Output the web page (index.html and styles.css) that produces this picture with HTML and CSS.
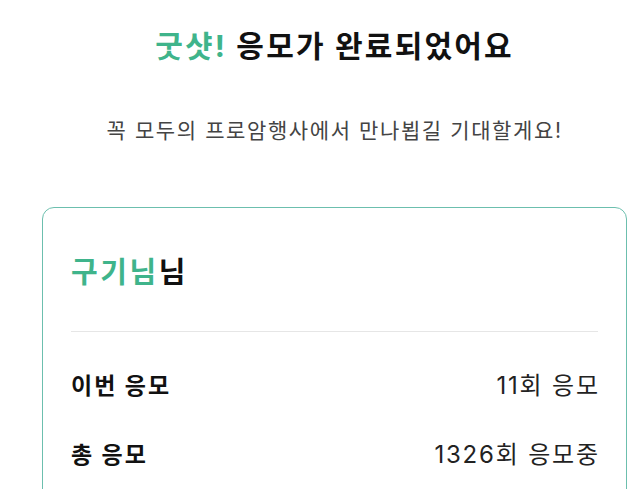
FILE: index.html
```html
<!DOCTYPE html>
<html lang="ko">
<head>
    <meta charset="UTF-8">
    <meta name="viewport" content="width=device-width, initial-scale=1.0">
    <title>응모 완료</title>
    <link rel="stylesheet" href="styles.css">
</head>
<body>
    <div class="page">
        <h1 class="title"><span class="accent">굿샷!</span> 응모가 완료되었어요</h1>
        <p class="subtitle">꼭 모두의 프로암행사에서 만나뵙길 기대할게요!</p>

        <div class="card">
            <h2 class="name"><span class="accent">구기님</span>님</h2>
            <div class="divider"></div>
            <div class="row">
                <span class="label">이번 응모</span>
                <span class="value">11회 응모</span>
            </div>
            <div class="row">
                <span class="label">총 응모</span>
                <span class="value">1326회 응모중</span>
            </div>
        </div>
    </div>
</body>
</html>
```

FILE: styles.css
```css
body {
    font-family: "Inter", "Noto Sans CJK KR", sans-serif;
    background-color: #ffffff;
    color: #111111;
    margin: 0;
}
.page {
    padding: 0 13px 0 42px;
}
.accent {
    color: #3fb48b;
}
.title {
    margin: 0;
    padding-top: 24px;
    text-align: center;
    font-size: 30px;
    font-weight: 700;
    line-height: 44px;
    letter-spacing: 2.2px;
}
.subtitle {
    margin: 0;
    padding-top: 48px;
    text-align: center;
    font-size: 21px;
    line-height: 30px;
    letter-spacing: 1.6px;
    color: #444444;
}
.card {
    margin-top: 61px;
    border: 1px solid #6cbfae;
    border-radius: 12px;
    padding: 45px 28px 30px;
    min-height: 400px;
}
.name {
    margin: 0;
    font-size: 29px;
    font-weight: 700;
    line-height: 40px;
    letter-spacing: 2.6px;
}
.divider {
    height: 1px;
    background-color: #e6e6e6;
    margin-top: 38px;
}
.row {
    display: flex;
    justify-content: space-between;
    align-items: center;
    font-size: 23px;
    line-height: 32px;
    margin-top: 38px;
}
.row + .row {
    margin-top: 37px;
}
.label {
    font-weight: 700;
    letter-spacing: 2px;
}
.value {
    color: #222222;
    font-size: 24px;
    letter-spacing: 1.8px;
    margin-right: -1.8px;
}
```
